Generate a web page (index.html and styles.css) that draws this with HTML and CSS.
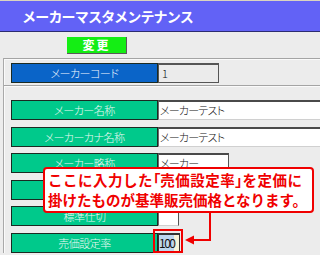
FILE: index.html
```html
<!DOCTYPE html>
<html lang="ja">
<head>
    <meta charset="UTF-8">
    <meta name="viewport" content="width=device-width, initial-scale=1.0">
    <title>メーカーマスタメンテナンス</title>
    <link rel="stylesheet" href="styles.css">
</head>
<body>
    <div class="title-bar">メーカーマスタメンテナンス</div>

    <div class="toolbar">
        <button class="btn-update">変更</button>
    </div>

    <div class="form-frame">
        <div class="section section-key">
            <div class="row">
                <div class="label label-key">メーカーコード</div>
                <div class="field field-key">1</div>
            </div>
        </div>
        <div class="section section-body">
            <div class="row">
                <div class="label">メーカー名称</div>
                <div class="field field-wide">メーカーテスト</div>
            </div>
            <div class="row">
                <div class="label">メーカーカナ名称</div>
                <div class="field field-wide">メーカーテスト</div>
            </div>
            <div class="row">
                <div class="label">メーカー略称</div>
                <div class="field field-mid">メーカー</div>
            </div>
            <div class="row">
                <div class="label">定価</div>
                <div class="field field-short"></div>
            </div>
            <div class="row">
                <div class="label">標準仕切</div>
                <div class="field field-short"></div>
            </div>
            <div class="row">
                <div class="label">売価設定率</div>
                <div class="field field-rate"><span class="selected">100</span></div>
            </div>
        </div>
    </div>

    <!-- 説明の吹き出し -->
    <div class="callout">
        <div class="callout-line1">ここに入力した<span class="bracket">「</span>売価設定率<span class="bracket">」</span>を定価に</div>
        <div>掛けたものが基準販売価格となります。</div>
    </div>
    <svg class="callout-arrow" viewBox="0 0 70 34" width="70" height="34">
        <path d="M60 0 V27 H42" fill="none" stroke="#f00000" stroke-width="2"/>
        <polygon points="35,27 44,22.5 44,31.5" fill="#f00000"/>
    </svg>
    <div class="focus-box"></div>
</body>
</html>
```

FILE: styles.css
```css
body {
    margin: 0;
    background: #ececec;
    font-family: "Noto Sans CJK JP", "DejaVu Sans", sans-serif;
    position: relative;
    width: 320px;
    height: 255px;
    overflow: hidden;
}
.title-bar {
    height: 30px;
    line-height: 31px;
    background: #6262f6;
    border-top: 1px solid #d9d4c0;
    border-bottom: 1px solid #2c2c70;
    color: #fff;
    font-size: 14px;
    font-weight: bold;
    letter-spacing: -0.8px;
    padding-left: 22px;
}
.toolbar {
    height: 26px;
    padding-left: 67px;
    box-sizing: border-box;
    padding-top: 5px;
}
.btn-update {
    display: block;
    width: 60px;
    height: 17px;
    padding: 0;
    border: none;
    border-right: 1px solid #5a5a5a;
    border-bottom: 1px solid #5a5a5a;
    background: #14ee14;
    color: #fff;
    font-family: inherit;
    font-size: 12px;
    font-weight: bold;
    line-height: 16px;
    letter-spacing: 2px;
}
.form-frame {
    margin-left: 3px;
    border-left: 1px solid #a9a9a9;
    box-shadow: inset 1px 0 #fafafa;
}
.section {
    border-top: 1px solid #a4a4a4;
    box-shadow: inset 0 1px #fafafa;
    padding-left: 7px;
}
.section-key {
    padding-top: 4px;
    padding-bottom: 2px;
}
.section-body {
    padding-top: 14px;
    display: flex;
    flex-direction: column;
    gap: 6.6px;
}
.row {
    display: flex;
    height: 20px;
}
.label {
    width: 147px;
    box-sizing: border-box;
    background: #00c98b;
    border: 1px solid #1b2a22;
    color: #eefaf4;
    font-size: 11px;
    font-weight: 300;
    font-feature-settings: "palt" 1;
    letter-spacing: -0.5px;
    line-height: 18px;
    text-align: center;
    white-space: nowrap;
}
.label-key {
    background: #0a64c8;
    color: #f4f8ff;
}
.field {
    box-sizing: border-box;
    background: #fff;
    border-top: 2px solid #4a4a4a;
    border-left: 1px solid #6a6a6a;
    border-bottom: 1px solid #d0d0d0;
    border-right: 1px solid #d0d0d0;
    font-size: 11px;
    font-weight: 300;
    font-feature-settings: "palt" 1;
    letter-spacing: -0.8px;
    line-height: 16px;
    padding-left: 1px;
    color: #111;
    white-space: nowrap;
    overflow: hidden;
}
.field-key {
    width: 61px;
    background: #ebebeb;
    border: 1px solid #555;
    border-top: 2px solid #555;
    padding-left: 3px;
}
.field-wide {
    flex: 1;
    border-right: none;
}
.field-mid {
    width: 71px;
    border-right: 1px solid #555;
}
.field-short {
    width: 21px;
    border-right: 1px solid #555;
}
.field-rate {
    width: 22px;
    background: #f7f4d8;
    border: 1px solid #333;
    border-top: 2px solid #333;
    font-size: 12px;
    font-weight: 400;
    padding-left: 0;
}
.selected {
    background: #bcd6ee;
    letter-spacing: -1.5px;
}

/* 吹き出し */
.callout {
    position: absolute;
    left: 43px;
    top: 167px;
    width: 271px;
    height: 46px;
    box-sizing: border-box;
    background: #fff;
    border: 2px solid #f00000;
    border-radius: 4px;
    color: #f00000;
    font-size: 14.5px;
    font-weight: bold;
    line-height: 20px;
    padding: 1px 0 0 3px;
    white-space: nowrap;
}
.callout-line1 {
    letter-spacing: 0.5px;
}
.bracket {
    font-feature-settings: "palt" 1;
    letter-spacing: 0;
}
.callout-arrow {
    position: absolute;
    left: 150px;
    top: 213px;
}
.focus-box {
    position: absolute;
    left: 153px;
    top: 229px;
    width: 30px;
    height: 24px;
    box-sizing: border-box;
    border: 2px solid #f00000;
}
```
